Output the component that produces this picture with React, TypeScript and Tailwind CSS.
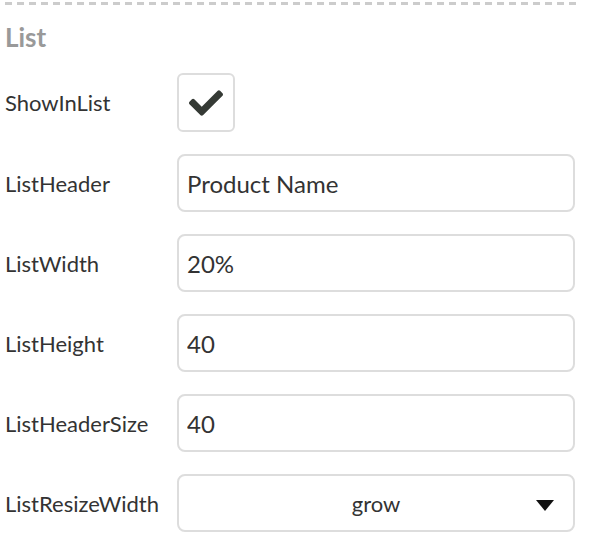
import { FaCheck } from "react-icons/fa";

const fields = [
  { label: "ListHeader", value: "Product Name" },
  { label: "ListWidth", value: "20%" },
  { label: "ListHeight", value: "40" },
  { label: "ListHeaderSize", value: "40" },
];

export default function App() {
  return (
    <div className="w-[596px] h-[548px] bg-white font-['Lato',sans-serif] text-[#333]">
      <div className="w-[578px] pt-[2px] pl-[5px]">
        <div className="h-[3px] bg-[repeating-linear-gradient(90deg,#cccccc_0_7px,transparent_7px_12px)]" />
        <h2 className="mt-[18px] text-[26px] leading-[28px] font-bold text-[#999999]">List</h2>

        <div className="mt-[22px] flex flex-col gap-[22px]">
          <Row label="ShowInList">
            <div className="w-[58px] h-[59px] rounded-[6px] border-2 border-[#dddddd] flex items-center justify-center">
              <FaCheck className="w-[34px] h-[34px] text-[#353a35]" />
            </div>
          </Row>

          {fields.map((f) => (
            <Row key={f.label} label={f.label}>
              <input
                readOnly
                value={f.value}
                className="w-[398px] h-[58px] rounded-[8px] border-2 border-[#dddddd] px-[8px] text-[24px] text-[#333] outline-none"
              />
            </Row>
          ))}

          <Row label="ListResizeWidth">
            <div className="w-[398px] h-[58px] rounded-[8px] border-2 border-[#dddddd] flex items-center relative">
              <span className="flex-1 text-center text-[22px]">grow</span>
              <svg className="absolute right-[19px] top-[24px]" width="18" height="11" viewBox="0 0 18 11">
                <path d="M0 0 H18 L9 11 Z" fill="#111" />
              </svg>
            </div>
          </Row>
        </div>
      </div>
    </div>
  );
}

function Row({ label, children }: { label: string; children: React.ReactNode }) {
  return (
    <div className="flex items-center">
      <span className="w-[172px] text-[22px] text-[#333]">{label}</span>
      {children}
    </div>
  );
}
